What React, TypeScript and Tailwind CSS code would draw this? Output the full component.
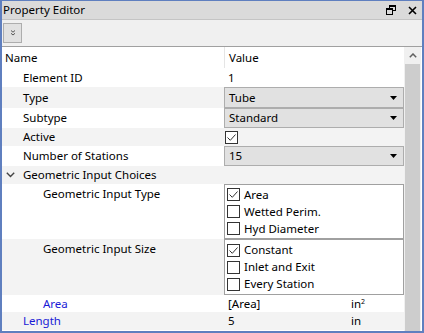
import React from "react";

const font = { fontFamily: '"Segoe UI", "Noto Sans", "Open Sans", sans-serif' };

function Arrow() {
  return (
    <svg width="7" height="4" viewBox="0 0 7 4" className="mr-[6px]">
      <path d="M0 0 H7 L3.5 4 Z" fill="#000" />
    </svg>
  );
}

function Check({ on }: { on?: boolean }) {
  return (
    <span className="w-[13px] h-[13px] border border-[#333] bg-white flex items-center justify-center shrink-0">
      {on && (
        <svg width="11" height="11" viewBox="0 0 11 11">
          <path d="M1.5 5.5 L4.3 8.3 L9.5 2.5" fill="none" stroke="#333" strokeWidth="1" />
        </svg>
      )}
    </span>
  );
}

function Dropdown({ text }: { text: string }) {
  return (
    <div className="h-full w-full border border-[#adadad] bg-[#e1e1e1] flex items-center justify-between pl-[4px]">
      <span>{text}</span>
      <Arrow />
    </div>
  );
}

function Row({
  label,
  indent,
  bg,
  h,
  children,
  blue,
  top,
}: {
  label: React.ReactNode;
  indent: number;
  bg: string;
  h: string;
  children?: React.ReactNode;
  blue?: boolean;
  top?: boolean;
}) {
  return (
    <div className={`flex ${h} ${bg}`}>
      <div
        className={`w-[222px] flex ${top ? "items-start pt-[1px]" : "items-center"} ${blue ? "text-[#1a1ad6]" : "text-black"}`}
        style={{ paddingLeft: indent }}
      >
        {label}
      </div>
      <div className="w-[180px] flex items-stretch">{children}</div>
    </div>
  );
}

function CheckList({ items }: { items: [string, boolean][] }) {
  return (
    <div className="w-full h-full border border-[#a0a0a0] bg-white flex flex-col justify-center gap-[4px] pl-[2px]">
      {items.map(([t, on]) => (
        <div key={t} className="flex items-center gap-[4px] h-[13px]">
          <Check on={on} />
          <span>{t}</span>
        </div>
      ))}
    </div>
  );
}

export default function App() {
  return (
    <div
      className="w-[424px] h-[333px] bg-white border-l-2 border-r-2 border-b-2 border-t border-[#5f7fbf] flex flex-col text-[11.5px] text-black overflow-hidden"
      style={font}
    >
      <div className="h-[19px] bg-[#dadada] border-b border-[#c4c4c4] flex items-center justify-between pl-[1px] pr-[5px]">
        <span>Property Editor</span>
        <div className="flex items-center gap-[12px]">
          <svg width="10" height="10" viewBox="0 0 10 10">
            <rect x="3.5" y="0.5" width="6" height="5" fill="none" stroke="#000" />
            <rect x="3.5" y="0.5" width="6" height="1.5" fill="#000" />
            <rect x="0.5" y="3.5" width="6" height="6" fill="#dadada" stroke="#000" />
            <rect x="0.5" y="3.5" width="6" height="1.5" fill="#000" />
          </svg>
          <svg width="9" height="9" viewBox="0 0 9 9">
            <path d="M1 1 L8 8 M8 1 L1 8" stroke="#000" strokeWidth="1.6" />
          </svg>
        </div>
      </div>
      <div className="h-[27px] bg-[#f0f0f0] border-b border-[#a0a0a0] flex items-center pl-[1px]">
        <div className="w-[19px] h-[20px] border border-[#adadad] bg-[#e1e1e1] flex items-center justify-center">
          <svg width="6" height="6" viewBox="0 0 6 6">
            <path d="M1 0.5 L3 2.2 L5 0.5 M1 3.3 L3 5 L5 3.3" fill="none" stroke="#555" strokeWidth="1" />
          </svg>
        </div>
      </div>
      <div className="flex flex-1 min-h-0">
        <div className="flex flex-col w-[402px]">
          <div className="flex h-[21px] bg-white">
            <div className="w-[222px] flex items-center pl-[3px]">Name</div>
            <div className="w-[180px] flex items-center pl-[4px] border-l border-[#e5e5e5]">Value</div>
          </div>
          <Row label="Element ID" indent={21} bg="bg-white" h="h-[19px]">
            <span className="pl-[4px] flex items-center">1</span>
          </Row>
          <Row label="Type" indent={21} bg="bg-[#f3f3f3]" h="h-[21px]">
            <Dropdown text="Tube" />
          </Row>
          <Row label="Subtype" indent={21} bg="bg-white" h="h-[20px]">
            <Dropdown text="Standard" />
          </Row>
          <Row label="Active" indent={21} bg="bg-[#f3f3f3]" h="h-[18px]">
            <span className="flex items-center pl-[1px]">
              <Check on />
            </span>
          </Row>
          <Row label="Number of Stations" indent={21} bg="bg-white" h="h-[20px]">
            <Dropdown text="15" />
          </Row>
          <Row
            label={
              <span className="flex items-center">
                <svg width="9" height="6" viewBox="0 0 9 6" className="ml-[4px] mr-[8px]">
                  <path d="M0.8 0.8 L4.5 4.5 L8.2 0.8" fill="none" stroke="#444" strokeWidth="1.4" />
                </svg>
                Geometric Input Choices
              </span>
            }
            indent={0}
            bg="bg-[#f3f3f3]"
            h="h-[18px]"
          />
          <Row label="Geometric Input Type" indent={41} bg="bg-white" h="h-[55px]" top>
            <CheckList
              items={[
                ["Area", true],
                ["Wetted Perim.", false],
                ["Hyd Diameter", false],
              ]}
            />
          </Row>
          <Row label="Geometric Input Size" indent={41} bg="bg-[#f3f3f3]" h="h-[56px]" top>
            <CheckList
              items={[
                ["Constant", true],
                ["Inlet and Exit", false],
                ["Every Station", false],
              ]}
            />
          </Row>
          <Row label="Area" indent={41} bg="bg-white" h="h-[17px]" blue>
            <div className="flex items-center w-full pl-[4px]">
              <span className="w-[123px]">[Area]</span>
              <span>
                in<sup className="text-[7px]">2</sup>
              </span>
            </div>
          </Row>
          <Row label="Length" indent={21} bg="bg-[#f3f3f3]" h="h-[18px]" blue>
            <div className="flex items-center w-full pl-[4px]">
              <span className="w-[123px]">5</span>
              <span>in</span>
            </div>
          </Row>
        </div>
        <div className="w-[17px] bg-[#f0f0f0] flex flex-col">
          <div className="h-[17px] flex items-center justify-center">
            <svg width="8" height="5" viewBox="0 0 8 5">
              <path d="M0.8 4.2 L4 1 L7.2 4.2" fill="none" stroke="#606060" strokeWidth="1.5" />
            </svg>
          </div>
          <div className="flex-1 bg-[#cdcdcd] mx-[1px]" />
        </div>
      </div>
    </div>
  );
}
